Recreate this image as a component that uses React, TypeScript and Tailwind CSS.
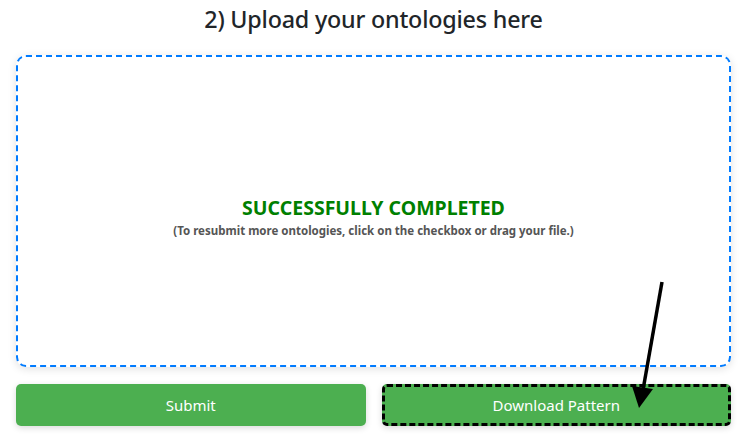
export default function App() {
  return (
    <div className="relative w-[747px] h-[434px] bg-white overflow-hidden font-['Noto_Sans',sans-serif]">
      <div className="px-4 pt-[3px]">
        <h2 className="text-center text-[23.3px] leading-[32px] font-medium text-[#212529] tracking-[-0.2px]">
          2) Upload your ontologies here
        </h2>

        <div className="mt-[20px] h-[312px] rounded-[10px] border-2 border-dashed border-[#007bff] bg-white shadow-[0_2px_8px_rgba(0,0,0,0.12)] flex flex-col items-center justify-center">
          <div className="mt-[12px] text-[19.5px] leading-6 font-bold text-[#008000]">
            SUCCESSFULLY COMPLETED
          </div>
          <div className="mt-[3px] text-[11.5px] leading-4 font-bold text-[#555]">
            (To resubmit more ontologies, click on the checkbox or drag your file.)
          </div>
        </div>

        <div className="mt-[17px] grid grid-cols-2 gap-4">
          <button className="h-[42px] rounded-[5px] bg-[#4caf50] text-white text-[15px] shadow-[0_2px_6px_rgba(0,0,0,0.15)]">
            Submit
          </button>
          <button className="h-[42px] rounded-[5px] bg-[#4caf50] text-white text-[15px] border-[3px] border-dashed border-black shadow-[0_2px_6px_rgba(0,0,0,0.15)]">
            Download Pattern
          </button>
        </div>
      </div>

      <svg
        className="absolute left-0 top-0 pointer-events-none"
        width="747"
        height="434"
        viewBox="0 0 747 434"
      >
        <line x1="662" y1="282" x2="643" y2="390" stroke="#000" strokeWidth="3.5" strokeLinecap="butt" />
        <polygon points="632,386 653,389 639,408" fill="#000" />
      </svg>
    </div>
  );
}
